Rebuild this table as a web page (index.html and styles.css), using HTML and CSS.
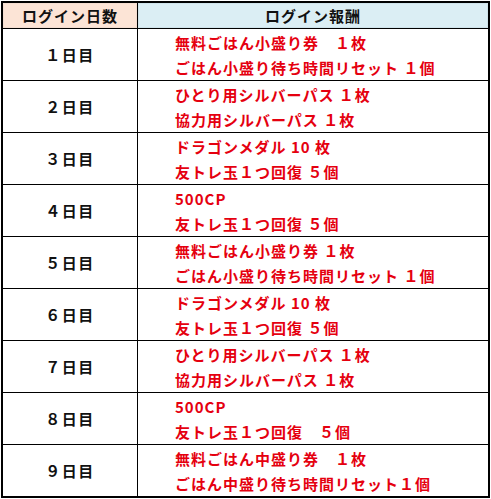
FILE: index.html
```html
<!DOCTYPE html>
<html lang="ja">
<head>
<meta charset="utf-8">
<link rel="stylesheet" href="styles.css">
</head>
<body>
<table class="bonus">
  <thead>
    <tr>
      <th class="h-day">ログイン日数</th>
      <th class="h-reward">ログイン報酬</th>
    </tr>
  </thead>
  <tbody>
    <tr><td class="day">１日目</td><td class="reward">無料ごはん小盛り券　１枚<br>ごはん小盛り待ち時間リセット １個</td></tr>
    <tr><td class="day">２日目</td><td class="reward">ひとり用シルバーパス １枚<br>協力用シルバーパス １枚</td></tr>
    <tr><td class="day">３日目</td><td class="reward">ドラゴンメダル 10 枚<br>友トレ玉１つ回復 ５個</td></tr>
    <tr><td class="day">４日目</td><td class="reward">500CP<br>友トレ玉１つ回復 ５個</td></tr>
    <tr><td class="day">５日目</td><td class="reward">無料ごはん小盛り券 １枚<br>ごはん小盛り待ち時間リセット １個</td></tr>
    <tr><td class="day">６日目</td><td class="reward">ドラゴンメダル 10 枚<br>友トレ玉１つ回復 ５個</td></tr>
    <tr><td class="day">７日目</td><td class="reward">ひとり用シルバーパス １枚<br>協力用シルバーパス １枚</td></tr>
    <tr><td class="day">８日目</td><td class="reward">500CP<br>友トレ玉１つ回復　５個</td></tr>
    <tr><td class="day">９日目</td><td class="reward">無料ごはん中盛り券　１枚<br>ごはん中盛り待ち時間リセット１個</td></tr>
  </tbody>
</table>
</body>
</html>
```
FILE: styles.css
```css
html, body {
  margin: 0;
  padding: 0;
  background: #ffffff;
}
body {
  padding: 1px 0 0 1px;
  font-family: "Noto Sans CJK JP", "Noto Sans", sans-serif;
  font-weight: bold;
}
.bonus {
  border-collapse: collapse;
  width: 489px;
  border: 2px solid #000;
  table-layout: fixed;
}
.bonus th, .bonus td {
  border: 1px solid #000;
  padding: 0;
}
.bonus th {
  height: 25px;
  font-size: 15px;
  letter-spacing: 1px;
  color: #111;
  text-align: center;
  line-height: 16px;
}
.h-day {
  width: 134px;
  background: #fce4d6;
  box-shadow: inset 0 0 0 1px #f3ddd0;
}
.h-reward {
  background: #dbeef4;
  box-shadow: inset 0 0 0 1px #cfe3ea;
}
.day {
  height: 51px;
  text-align: center;
  font-size: 15px;
  line-height: 20px;
  letter-spacing: 1.5px;
  color: #111;
}
.reward {
  padding-left: 37px !important;
  font-size: 15px;
  line-height: 25px;
  letter-spacing: 1px;
  color: #e5000f;
  vertical-align: middle;
  white-space: nowrap;
}
```
